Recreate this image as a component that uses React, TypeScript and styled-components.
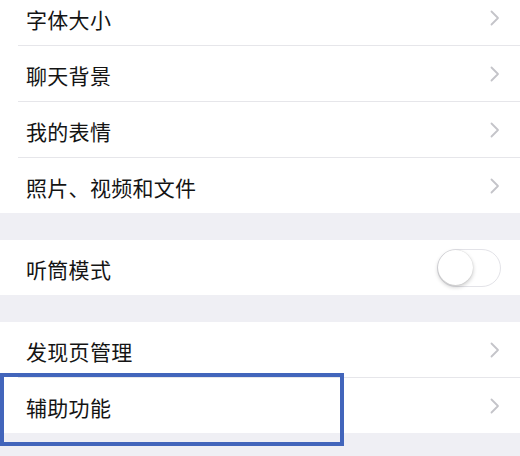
import styled, { createGlobalStyle } from "styled-components";

const GlobalStyle = createGlobalStyle`
  html, body {
    margin: 0;
    padding: 0;
    background: #efeff4;
    overflow: hidden;
  }
  body {
    font-family: "Noto Sans CJK SC", "Noto Sans", sans-serif;
  }
`;

const Page = styled.div`
  width: 520px;
  height: 456px;
  overflow: hidden;
  margin-top: -10px;
`;

const Group = styled.div<{ $gap?: number }>`
  background: #fff;
  margin-top: ${(p) => p.$gap ?? 0}px;
`;

const Row = styled.div<{ $last?: boolean }>`
  position: relative;
  height: ${(p) => (p.$last ? 55 : 56)}px;
  padding-left: 18px;
  box-sizing: border-box;
`;

const Inner = styled.div<{ $last?: boolean }>`
  height: 100%;
  display: flex;
  align-items: center;
  padding: 0 20px 0 8px;
  box-sizing: border-box;
  border-bottom: ${(p) => (p.$last ? "none" : "1px solid #e6e6ea")};
`;

const Label = styled.span`
  flex: 1;
  font-size: 21px;
  color: #141414;
  letter-spacing: 0.3px;
  padding-top: 2px;
`;

const Switch = styled.div`
  width: 64px;
  height: 38px;
  border-radius: 19px;
  border: 1.5px solid #e3e3e8;
  box-sizing: border-box;
  background: #fff;
  position: relative;
  margin-right: -1px;
`;

const Knob = styled.div`
  position: absolute;
  left: 0;
  top: 0;
  width: 35px;
  height: 35px;
  border-radius: 50%;
  background: #fff;
  box-shadow: 0 2px 4px rgba(0, 0, 0, 0.22), 0 0 1px rgba(0, 0, 0, 0.2);
`;

const Highlight = styled.div`
  position: absolute;
  left: 0;
  top: -5px;
  width: 344px;
  height: 73px;
  border: 4px solid #4265bb;
  box-sizing: border-box;
  pointer-events: none;
`;

const Chevron = () => (
  <svg width="10" height="16" viewBox="0 0 10 16">
    <path d="M1.5 1.5 L8 8 L1.5 14.5" fill="none" stroke="#c4c4c9" strokeWidth="1.8" strokeLinecap="round" strokeLinejoin="round" />
  </svg>
);

const Item = ({ label, last }: { label: string; last?: boolean }) => (
  <Row $last={last}>
    <Inner $last={last}>
      <Label>{label}</Label>
      <Chevron />
    </Inner>
  </Row>
);

export default function App() {
  return (
    <>
      <GlobalStyle />
      <Page>
        <Group>
          <Item label="字体大小" />
          <Item label="聊天背景" />
          <Item label="我的表情" />
          <Item label="照片、视频和文件" last />
        </Group>
        <Group $gap={27}>
          <Row $last>
            <Inner $last>
              <Label>听筒模式</Label>
              <Switch>
                <Knob />
              </Switch>
            </Inner>
          </Row>
        </Group>
        <Group $gap={27}>
          <Item label="发现页管理" />
          <Row $last>
            <Inner $last>
              <Label>辅助功能</Label>
              <Chevron />
            </Inner>
            <Highlight />
          </Row>
        </Group>
      </Page>
    </>
  );
}
